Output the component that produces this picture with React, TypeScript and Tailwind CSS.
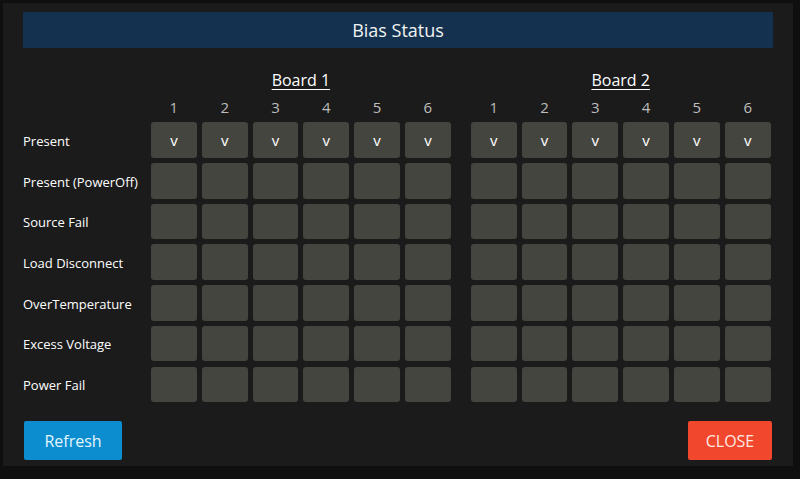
import React from "react";

const rows = [
  "Present",
  "Present (PowerOff)",
  "Source Fail",
  "Load Disconnect",
  "OverTemperature",
  "Excess Voltage",
  "Power Fail",
];
const cols = [1, 2, 3, 4, 5, 6];

function Cell({ v }: { v: boolean }) {
  return (
    <div className="h-[35.5px] rounded-[3px] bg-[#45453f] flex items-center justify-center text-[15px] text-white">
      {v ? "v" : ""}
    </div>
  );
}

export default function App() {
  return (
    <div
      className="w-[800px] h-[479px] bg-[#0f0f0f] pt-[3px] pl-[3px]"
      style={{ fontFamily: '"Open Sans", "Noto Sans", sans-serif' }}
    >
      <div className="w-[790px] h-[463px] bg-[#1b1b1b] px-[20px] pt-[9px] flex flex-col">
        <div className="h-[36px] bg-[#14324f] flex items-center justify-center text-[18px] text-[#f2f2f2]">
          Bias Status
        </div>
        <div className="mt-[20px] grid grid-cols-[123px_repeat(6,45.8px)_10px_repeat(6,45.8px)] gap-x-[5px] gap-y-[5.2px]">
          <div />
          <div className="col-span-6 h-[24px] flex items-center justify-center text-[16px] text-white underline underline-offset-[3px]">
            Board 1
          </div>
          <div />
          <div className="col-span-6 h-[24px] flex items-center justify-center text-[16px] text-white underline underline-offset-[3px]">
            Board 2
          </div>
          <div />
          {cols.map((c) => (
            <div key={"a" + c} className="h-[20px] flex items-center justify-center text-[15px] text-[#bdbdbd]">
              {c}
            </div>
          ))}
          <div />
          {cols.map((c) => (
            <div key={"b" + c} className="h-[20px] flex items-center justify-center text-[15px] text-[#bdbdbd]">
              {c}
            </div>
          ))}
          {rows.map((r, i) => (
            <React.Fragment key={r}>
              <div className="h-[35.5px] pt-[3px] flex items-center text-[13px] text-white">{r}</div>
              {cols.map((c) => (
                <Cell key={"x" + c} v={i === 0} />
              ))}
              <div />
              {cols.map((c) => (
                <Cell key={"y" + c} v={i === 0} />
              ))}
            </React.Fragment>
          ))}
        </div>
        <div className="mt-auto mb-[6px] flex justify-between">
          <button className="w-[98px] h-[39px] ml-[1px] rounded-[2px] bg-[#0b8dd0] text-[16px] text-[#e4f6ff]">
            Refresh
          </button>
          <button className="w-[84px] h-[39px] mr-[1px] rounded-[2px] bg-[#f1472d] text-[16px] text-[#fde9e2]">
            CLOSE
          </button>
        </div>
      </div>
    </div>
  );
}
